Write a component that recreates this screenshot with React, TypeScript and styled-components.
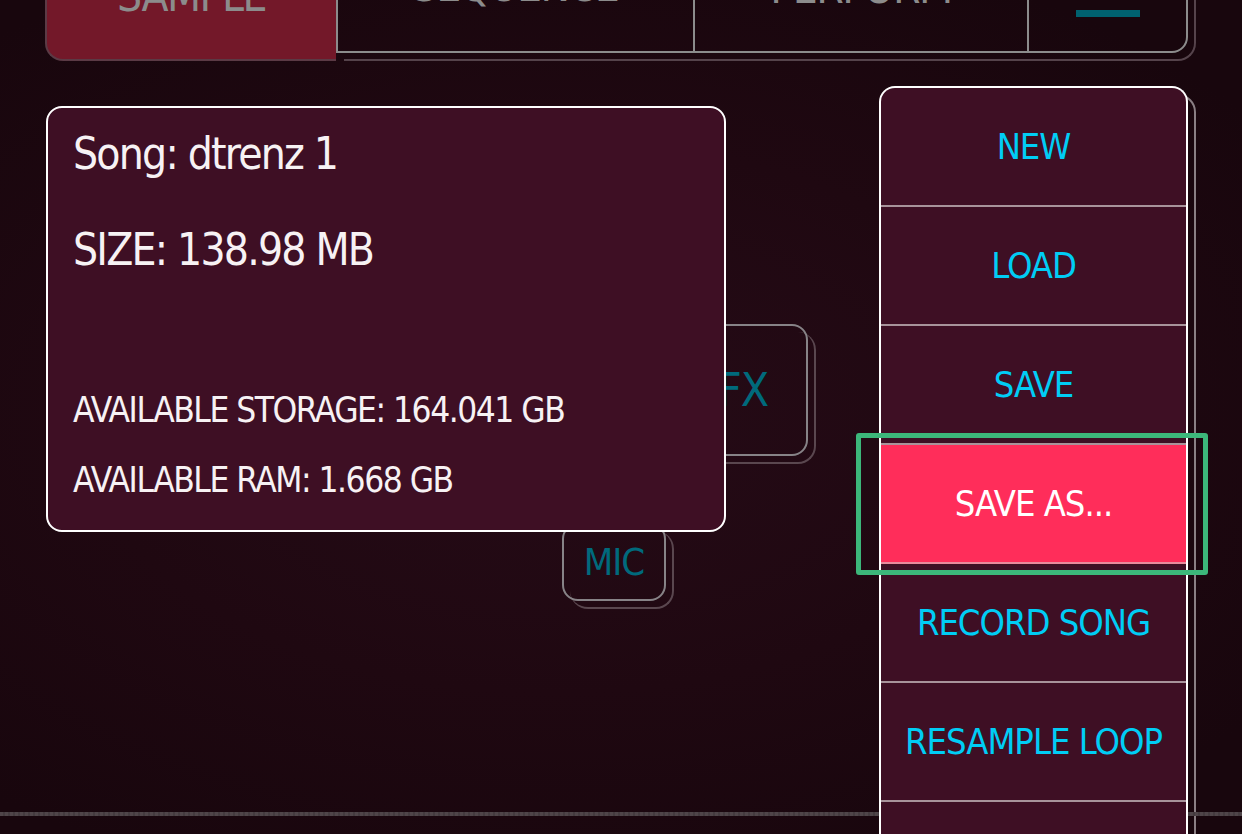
import React from "react";
import styled, { createGlobalStyle, css } from "styled-components";

const FONT = `"Liberation Sans Narrow", "DejaVu Sans Condensed", "Liberation Sans", sans-serif`;

const GlobalStyle = createGlobalStyle`
  html, body {
    margin: 0;
    padding: 0;
    background: #1c0710;
  }
  body {
    font-family: ${FONT};
    font-stretch: condensed;
    -webkit-font-smoothing: antialiased;
  }
  * { box-sizing: border-box; }
`;

const Page = styled.div`
  position: relative;
  isolation: isolate;
  width: 1242px;
  height: 834px;
  overflow: hidden;
  display: flex;
  flex-direction: column;
  align-items: flex-start;
  background:
    radial-gradient(ellipse 70% 60% at 45% 50%, #260b17 0%, #1f0811 55%, #18060d 100%);
`;

/* ---------- top tab bar ---------- */

const TabBar = styled.div`
  display: flex;
  align-items: flex-start;
  margin-top: -47px;
  padding-left: 45px;
`;

const tabText = css`
  color: #8c8c8c;
  font-size: 44px;
  line-height: 50px;
  letter-spacing: -1.5px;
  text-align: center;
  white-space: nowrap;
`;

const PressedTab = styled.div`
  width: 291px;
  height: 100px;
  margin-top: 8px;
  padding-top: 10px;
  background: #731829;
  border-left: 2px solid #5b3a45;
  border-bottom: 2px solid #5b3a45;
  border-bottom-left-radius: 18px;
  ${tabText}
`;

const TabGroup = styled.div`
  position: relative;
  display: flex;
  width: 852px;
  height: 100px;
  border: 2px solid #8c8c8c;
  border-bottom-right-radius: 16px;

  &::after {
    content: "";
    position: absolute;
    top: 6px;
    left: 6px;
    right: -10px;
    bottom: -10px;
    border-right: 2px solid #55434b;
    border-bottom: 2px solid #55434b;
    border-bottom-right-radius: 18px;
    z-index: -1;
  }
`;

const Tab = styled.div<{ $w?: number }>`
  ${(p) =>
    p.$w
      ? css`
          width: ${p.$w}px;
          border-right: 2px solid #8c8c8c;
        `
      : css`
          flex: 1;
        `}
  height: 100%;
  padding-top: ${(p) => (p.$w === 357 ? 6 : 8)}px;
  ${tabText}
`;

const MenuTab = styled.div`
  flex: 1;
  display: flex;
  justify-content: center;
  padding-top: 17px;
`;

const Hamburger = styled.div`
  display: flex;
  flex-direction: column;
  gap: 12px;
  width: 64px;
`;

const HamBar = styled.span`
  display: block;
  height: 7px;
  background: #00616f;
`;

/* ---------- pads underneath the overlay ---------- */

const Pad = styled.div<{ $w: number; $h: number; $ml: number; $mt: number; $fs: number }>`
  position: relative;
  width: ${(p) => p.$w}px;
  height: ${(p) => p.$h}px;
  margin-left: ${(p) => p.$ml}px;
  margin-top: ${(p) => p.$mt}px;
  border: 2px solid #878387;
  border-radius: 16px;
  display: flex;
  align-items: center;
  justify-content: center;
  color: #006a7c;
  font-size: ${(p) => p.$fs}px;
  letter-spacing: -1px;
  line-height: 1;

  &::after {
    content: "";
    position: absolute;
    top: 6px;
    left: 6px;
    right: -10px;
    bottom: -10px;
    border-right: 2px solid #5a474f;
    border-bottom: 2px solid #5a474f;
    border-radius: 18px;
    z-index: -1;
  }
`;

const BottomRule = styled.div`
  width: 100%;
  height: 4px;
  margin-top: 211px;
  background: repeating-linear-gradient(90deg, #4f4549 0 3px, #443b3f 3px 5px);
`;

/* ---------- overlay: song info ---------- */

const InfoPanel = styled.div`
  position: absolute;
  left: 46px;
  top: 106px;
  width: 680px;
  height: 426px;
  padding: 18px 25px 0;
  background: #3e0f24;
  border: 2px solid #ffffff;
  border-radius: 16px;
  color: #f7f2f4;
  display: flex;
  flex-direction: column;
`;

const BigLine = styled.div<{ $mt?: number }>`
  font-size: 44px;
  line-height: 56px;
  letter-spacing: -1.8px;
  margin-top: ${(p) => p.$mt ?? 0}px;
  white-space: nowrap;
`;

const SmallLine = styled.div<{ $mt?: number }>`
  font-size: 35px;
  line-height: 44px;
  letter-spacing: -1.5px;
  margin-top: ${(p) => p.$mt ?? 0}px;
  white-space: nowrap;
`;

/* ---------- overlay: file menu ---------- */

const FileMenu = styled.div`
  position: absolute;
  left: 879px;
  top: 86px;
  width: 309px;
  bottom: -120px;
  background: #3e0f24;
  border: 2px solid #ffffff;
  border-bottom: none;
  border-radius: 16px 16px 0 0;
  display: flex;
  flex-direction: column;

  &::after {
    content: "";
    position: absolute;
    top: 6px;
    left: 6px;
    right: -10px;
    bottom: 0;
    border: 2px solid #8a7f84;
    border-radius: 18px 18px 0 0;
    z-index: -1;
  }
`;

const MenuItem = styled.div<{ $active?: boolean }>`
  height: 119px;
  flex: none;
  display: flex;
  align-items: center;
  justify-content: center;
  border-bottom: 2px solid ${(p) => (p.$active ? "#e88a9c" : "#a8939b")};
  background: ${(p) => (p.$active ? "#ff2d5a" : "transparent")};
  color: ${(p) => (p.$active ? "#ffffff" : "#00cdf5")};
  font-size: 36px;
  letter-spacing: -1px;
  line-height: 1;
  white-space: nowrap;
`;

const Highlight = styled.div`
  position: absolute;
  left: 856px;
  top: 433px;
  width: 352px;
  height: 142px;
  border: 5px solid #3cb77a;
  border-radius: 3px;
  pointer-events: none;
`;

const menuItems = ["NEW", "LOAD", "SAVE", "SAVE AS...", "RECORD SONG", "RESAMPLE LOOP", ""];

export default function App() {
  return (
    <>
      <GlobalStyle />
      <Page>
        <TabBar>
          <PressedTab>SAMPLE</PressedTab>
          <TabGroup>
            <Tab $w={357}>SEQUENCE</Tab>
            <Tab $w={334}>PERFORM</Tab>
            <MenuTab>
              <Hamburger>
                <HamBar />
                <HamBar />
                <HamBar />
              </Hamburger>
            </MenuTab>
          </TabGroup>
        </TabBar>

        <Pad $w={130} $h={132} $ml={678} $mt={263} $fs={46}>
          FX
        </Pad>
        <Pad $w={104} $h={78} $ml={562} $mt={67} $fs={38}>
          MIC
        </Pad>

        <BottomRule />

        <InfoPanel>
          <BigLine>Song: dtrenz 1</BigLine>
          <BigLine $mt={40}>SIZE: 138.98 MB</BigLine>
          <SmallLine $mt={110}>AVAILABLE STORAGE: 164.041 GB</SmallLine>
          <SmallLine $mt={26}>AVAILABLE RAM: 1.668 GB</SmallLine>
        </InfoPanel>

        <FileMenu>
          {menuItems.map((label, i) => (
            <MenuItem key={i} $active={label === "SAVE AS..."}>
              {label}
            </MenuItem>
          ))}
        </FileMenu>

        <Highlight />
      </Page>
    </>
  );
}
